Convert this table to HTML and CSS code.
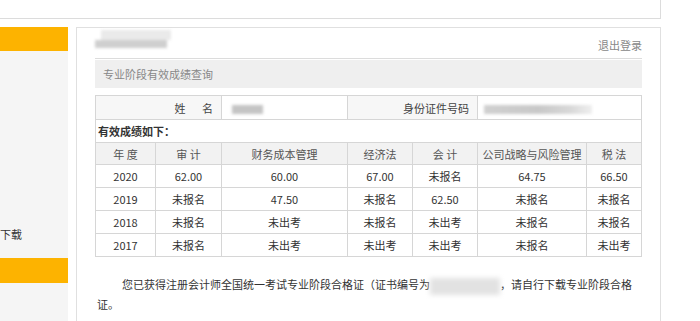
FILE: index.html
```html
<!DOCTYPE html>
<html lang="zh-CN">
<head>
<meta charset="utf-8">
<title>专业阶段有效成绩查询</title>
<link rel="stylesheet" href="styles.css">
</head>
<body>
<div class="topbar"></div>
<div class="layout">
  <aside class="sidebar">
    <div class="nav-active"></div>
    <div class="nav-group">
      <div class="nav-item">下载</div>
    </div>
    <div class="nav-active tall"></div>
  </aside>
  <main class="panel">
    <div class="panel-head">
      <div class="user-blur"><span class="b1"></span><span class="b2"></span></div>
      <a class="logout">退出登录</a>
    </div>
    <div class="panel-title">专业阶段有效成绩查询</div>
    <table class="scores">
      <colgroup>
        <col style="width:60px"><col style="width:66px"><col style="width:126px"><col style="width:65px"><col style="width:65px"><col style="width:109px"><col style="width:55px">
      </colgroup>
      <tr class="info">
        <th colspan="2" class="label">姓&emsp;&ensp;名</th>
        <td class="val"><span class="blur name"></span></td>
        <th colspan="2" class="label">身份证件号码</th>
        <td colspan="2" class="val"><span class="blur id"></span></td>
      </tr>
      <tr class="caption">
        <td colspan="7">有效成绩如下：</td>
      </tr>
      <tr class="head">
        <th>年 度</th><th>审 计</th><th>财务成本管理</th><th>经济法</th><th>会 计</th><th>公司战略与风险管理</th><th>税 法</th>
      </tr>
      <tr><td>2020</td><td>62.00</td><td>60.00</td><td>67.00</td><td>未报名</td><td>64.75</td><td>66.50</td></tr>
      <tr><td>2019</td><td>未报名</td><td>47.50</td><td>未报名</td><td>62.50</td><td>未报名</td><td>未报名</td></tr>
      <tr><td>2018</td><td>未报名</td><td>未出考</td><td>未报名</td><td>未出考</td><td>未报名</td><td>未报名</td></tr>
      <tr><td>2017</td><td>未报名</td><td>未出考</td><td>未出考</td><td>未出考</td><td>未报名</td><td>未出考</td></tr>
    </table>
    <p class="notice">您已获得注册会计师全国统一考试专业阶段合格证（证书编号为<span class="blur cert"></span>，请自行下载专业阶段合格证。</p>
  </main>
</div>
</body>
</html>
```

FILE: styles.css
```css
html, body {
  margin: 0;
  padding: 0;
  background: #fff;
}
body {
  font-family: "Microsoft YaHei", "Noto Sans CJK SC", sans-serif;
  font-size: 11px;
  color: #333;
  width: 700px;
  height: 321px;
  overflow: hidden;
}
.topbar {
  width: 661px;
  height: 19px;
  box-sizing: border-box;
  border-right: 1px solid #dcdcdc;
  border-bottom: 1px solid #dcdcdc;
}
.layout {
  display: flex;
  align-items: flex-start;
  margin-top: 8px;
}
.sidebar {
  width: 68px;
  flex: none;
  background: #f5f5f5;
  display: flex;
  flex-direction: column;
  height: 300px;
}
.nav-active {
  height: 24px;
  background: #fdb300;
}
.nav-active.tall {
  height: 25px;
}
.nav-group {
  height: 207px;
  box-sizing: border-box;
  display: flex;
  flex-direction: column;
  justify-content: flex-end;
  padding-bottom: 14px;
}
.nav-item {
  height: 20px;
  line-height: 20px;
  color: #333;
  white-space: nowrap;
}
.panel {
  margin-left: 8px;
  width: 585px;
  min-height: 300px;
  box-sizing: border-box;
  border: 1px solid #e0e0e0;
  padding: 0 18px;
}
.panel-head {
  height: 30px;
  border-bottom: 1px solid #dcdcdc;
  display: flex;
  justify-content: space-between;
  align-items: flex-end;
}
.user-blur {
  display: flex;
  flex-direction: column;
  align-self: flex-start;
  margin-top: 2px;
  filter: blur(1.5px);
}
.user-blur .b1 {
  width: 70px;
  height: 10px;
  margin-left: 6px;
  background: #eaeaea;
}
.user-blur .b2 {
  width: 72px;
  height: 8px;
  background: #cfcfcf;
}
.logout {
  color: #888;
  line-height: 20px;
  margin-bottom: 3px;
  cursor: pointer;
}
.panel-title {
  margin-top: 1px;
  height: 28px;
  line-height: 28px;
  background: #efefef;
  color: #888;
  padding-left: 8px;
}
.scores {
  margin-top: 7px;
  width: 546px;
  border-collapse: collapse;
  table-layout: fixed;
  font-size: 11px;
}
.scores th, .scores td {
  border: 1px solid #d6d6d6;
  text-align: center;
  font-weight: normal;
  padding: 0;
  height: 22px;
  color: #333;
}
.scores tr.info th, .scores tr.info td {
  height: 23px;
}
.scores tr.caption td {
  height: 22px;
}
.scores th.label {
  text-align: right;
  padding-right: 8px;
  background: #f7f7f7;
  color: #444;
}
.scores td.val {
  text-align: left;
  padding-left: 10px;
}
.scores tr.caption td {
  text-align: left;
  font-weight: bold;
  padding-left: 2px;
}
.scores tr.head th {
  background: #f2f2f2;
  color: #555;
  height: 21px;
}
.blur {
  display: inline-block;
  vertical-align: middle;
  filter: blur(1.5px);
}
.blur.name {
  width: 31px;
  height: 9px;
  background: #c4c4c4;
}
.blur.id {
  width: 108px;
  height: 9px;
  background: linear-gradient(90deg, #d0d0d0 0%, #c8c8c8 50%, #d8d8d8 80%, #eeeeee 100%);
  margin-left: -4px;
}
.blur.cert {
  width: 70px;
  height: 17px;
  background: #e2e2e2;
  filter: blur(2.5px);
}
.notice {
  margin: 18px 0 0;
  padding: 0 2px;
  line-height: 19px;
  text-indent: 25px;
  color: #333;
}
```
